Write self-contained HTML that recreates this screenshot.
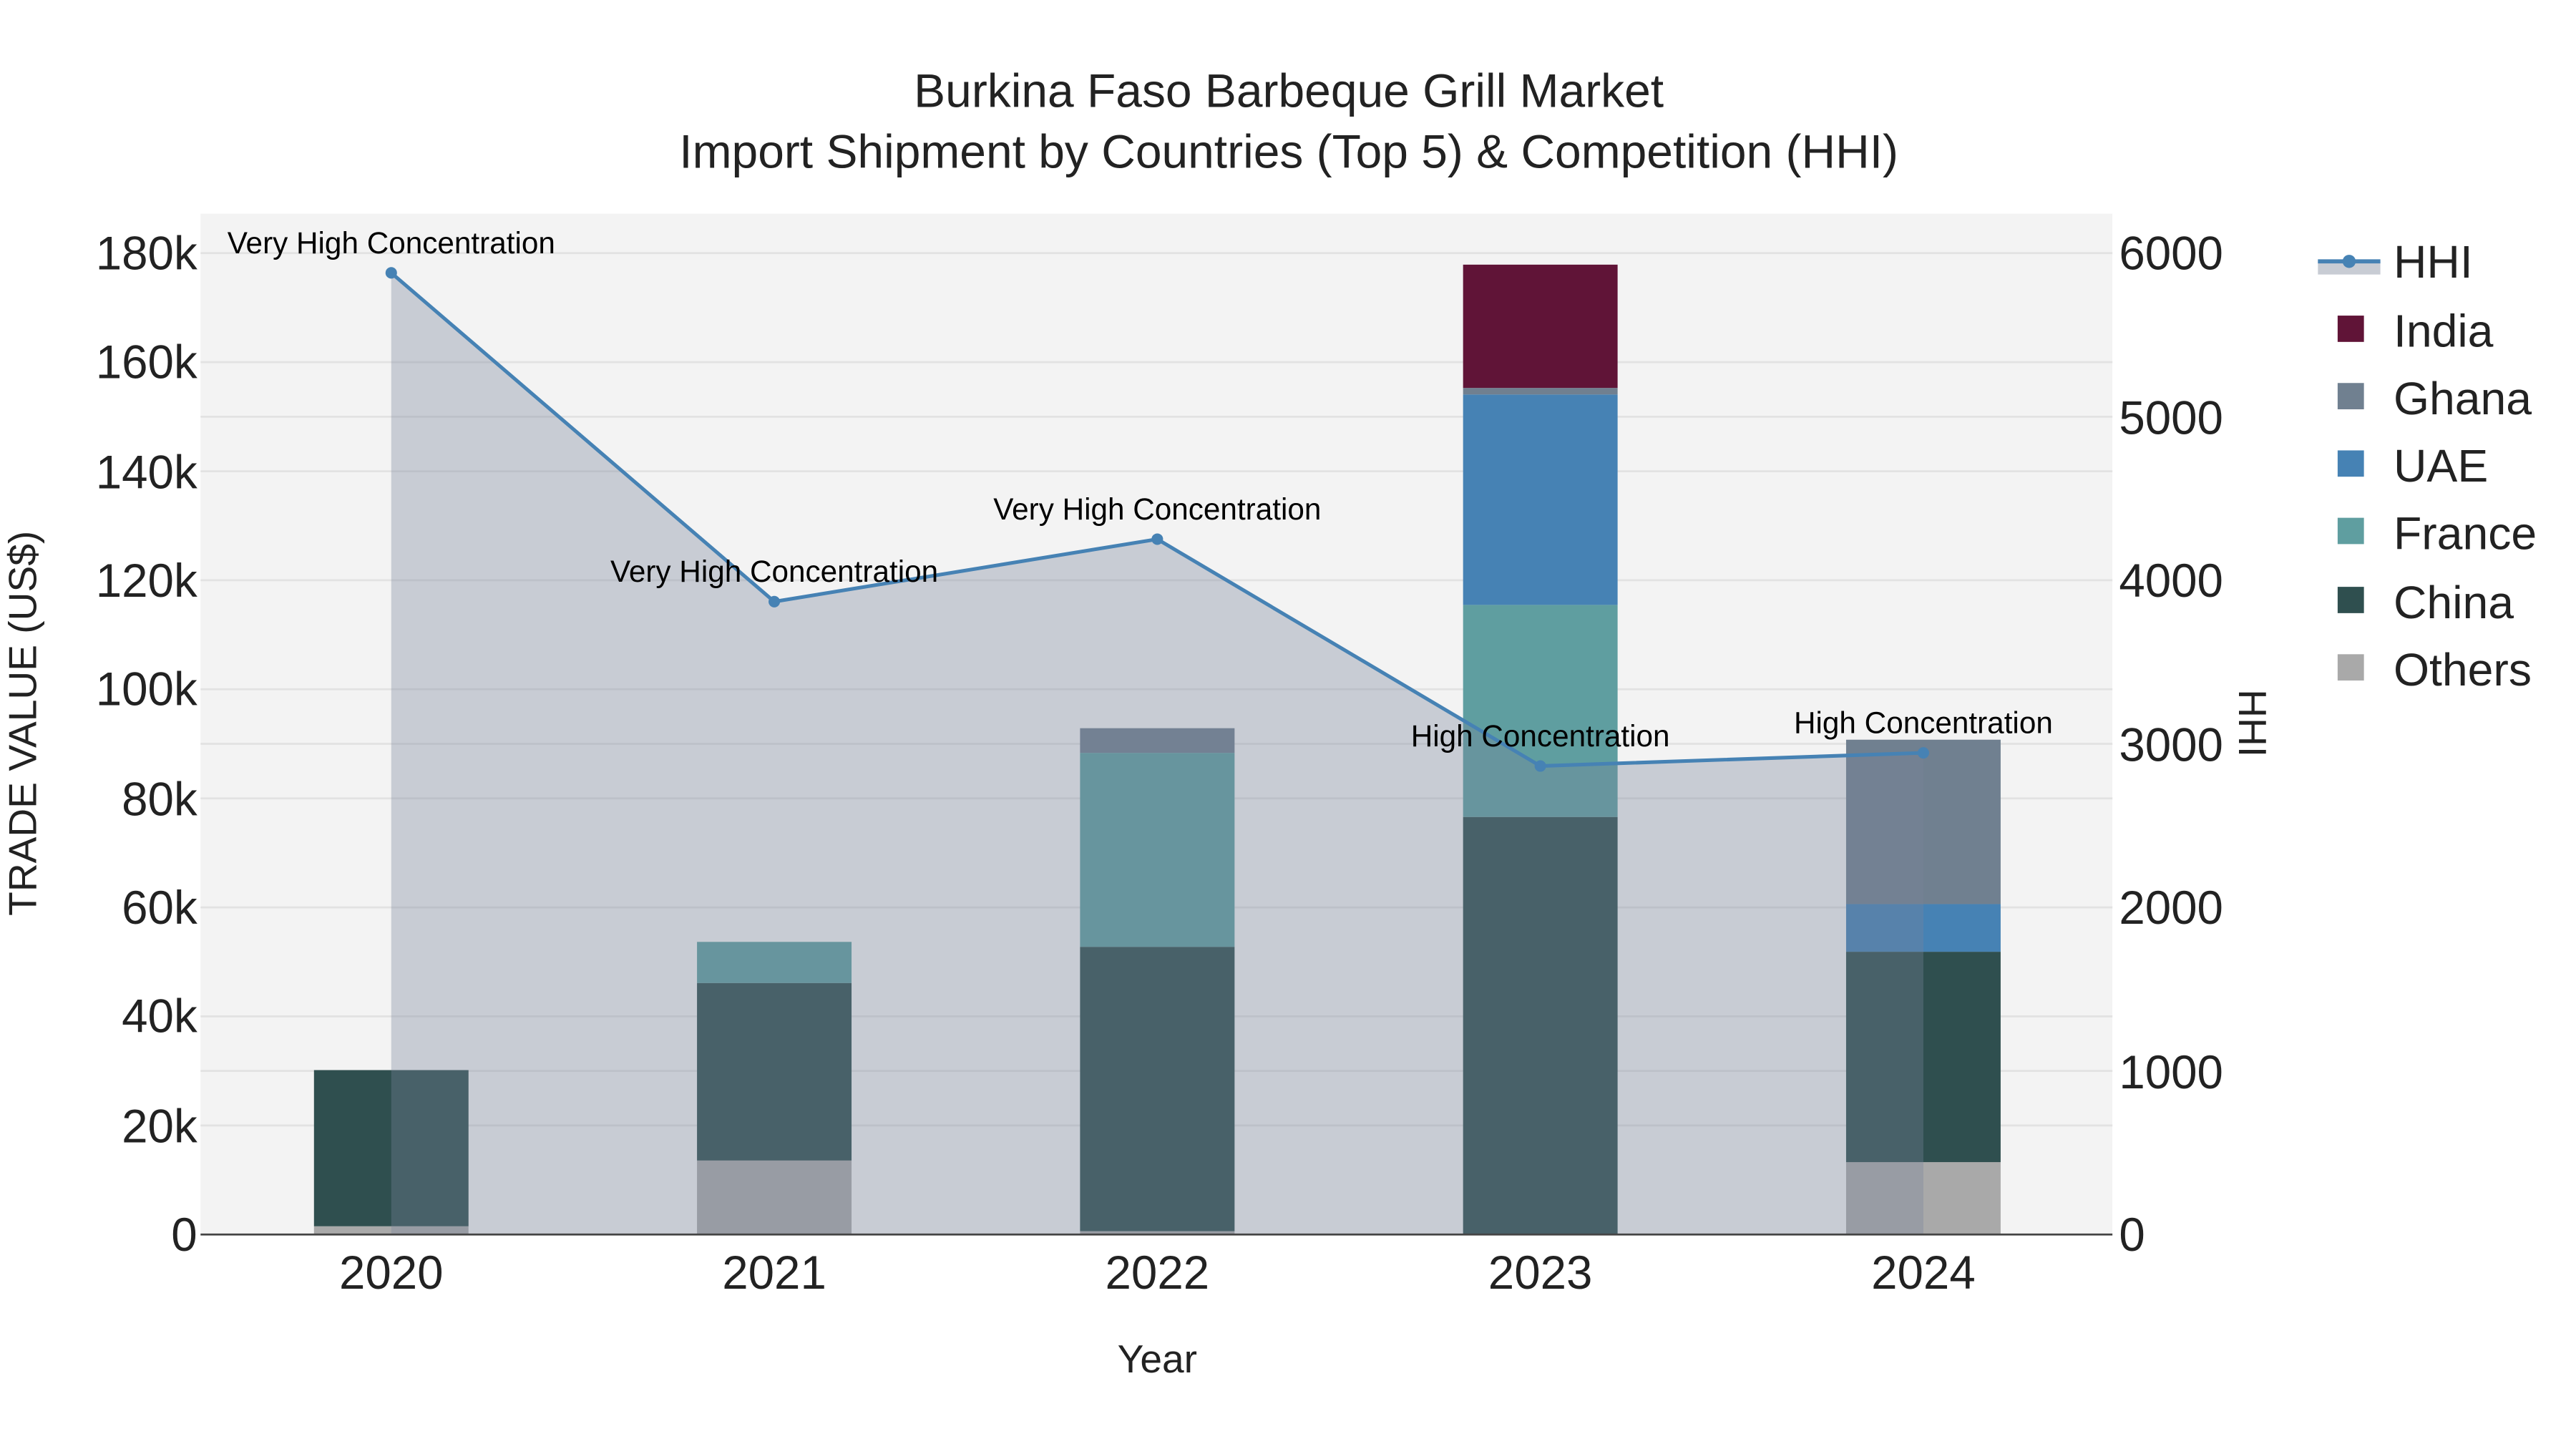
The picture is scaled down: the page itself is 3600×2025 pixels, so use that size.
<!DOCTYPE html>
<html><head><meta charset="utf-8"><style>html,body{margin:0;padding:0;background:#fff}svg{display:block}</style></head>
<body>
<svg width="3600" height="2025" viewBox="0 0 1567 881.5" preserveAspectRatio="none" xmlns="http://www.w3.org/2000/svg" font-family="Liberation Sans, sans-serif">
<rect x="0" y="0" width="1567" height="881.5" fill="#fff"/>
<rect x="122" y="130" width="1163" height="621" fill="#f3f3f3"/>
<g stroke="#e2e2e2" stroke-width="1.2">
<line x1="122" x2="1285" y1="684.7" y2="684.7"/><line x1="122" x2="1285" y1="618.3" y2="618.3"/>
<line x1="122" x2="1285" y1="552" y2="552"/><line x1="122" x2="1285" y1="485.7" y2="485.7"/>
<line x1="122" x2="1285" y1="419.3" y2="419.3"/><line x1="122" x2="1285" y1="353" y2="353"/>
<line x1="122" x2="1285" y1="286.7" y2="286.7"/><line x1="122" x2="1285" y1="220.3" y2="220.3"/>
<line x1="122" x2="1285" y1="154" y2="154"/>
<line x1="122" x2="1285" y1="651.5" y2="651.5"/>
<line x1="122" x2="1285" y1="452.5" y2="452.5"/>
<line x1="122" x2="1285" y1="253.5" y2="253.5"/>
</g>
<g>
<rect x="191" y="746" width="94" height="5" fill="#a9a9a9"/>
<rect x="191" y="651" width="94" height="95" fill="#2f4f4f"/>
<rect x="424" y="706" width="94" height="45" fill="#a9a9a9"/>
<rect x="424" y="598" width="94" height="108" fill="#2f4f4f"/>
<rect x="424" y="573" width="94" height="25" fill="#5f9ea0"/>
<rect x="657" y="749" width="94" height="2" fill="#a9a9a9"/>
<rect x="657" y="576" width="94" height="173" fill="#2f4f4f"/>
<rect x="657" y="458" width="94" height="118" fill="#5f9ea0"/>
<rect x="657" y="443" width="94" height="15" fill="#708090"/>
<rect x="890" y="497" width="94" height="254" fill="#2f4f4f"/>
<rect x="890" y="368" width="94" height="129" fill="#5f9ea0"/>
<rect x="890" y="240" width="94" height="128" fill="#4682b4"/>
<rect x="890" y="236" width="94" height="4" fill="#708090"/>
<rect x="890" y="161" width="94" height="75" fill="#601437"/>
<rect x="1123" y="707" width="94" height="44" fill="#a9a9a9"/>
<rect x="1123" y="579" width="94" height="128" fill="#2f4f4f"/>
<rect x="1123" y="550" width="94" height="29" fill="#4682b4"/>
<rect x="1123" y="450" width="94" height="100" fill="#708090"/>
</g>
<polygon points="238,166 471,366 704,328 937,466 1170,458 1170,751 238,751" fill="rgb(121,132,155)" fill-opacity="0.35"/>
<line x1="122" x2="1285" y1="751" y2="751" stroke="#444" stroke-width="1.2"/>
<polyline points="238,166 471,366 704,328 937,466 1170,458" fill="none" stroke="#4682b4" stroke-width="2.2"/>
<g fill="#4682b4"><circle cx="238" cy="166" r="3.5"/><circle cx="471" cy="366" r="3.5"/><circle cx="704" cy="328" r="3.5"/><circle cx="937" cy="466" r="3.5"/><circle cx="1170" cy="458" r="3.5"/></g>
<g font-size="18.4" text-anchor="middle" fill="#000">
<text x="238" y="154">Very High Concentration</text>
<text x="471" y="354">Very High Concentration</text>
<text x="704" y="316">Very High Concentration</text>
<text x="937" y="454">High Concentration</text>
<text x="1170" y="446">High Concentration</text>
</g>
<g font-size="28.7" text-anchor="middle" fill="#222">
<text x="784" y="65">Burkina Faso Barbeque Grill Market</text>
<text x="784" y="102">Import Shipment by Countries (Top 5) &amp; Competition (HHI)</text>
</g>
<g font-size="28.5" text-anchor="end" fill="#222">
<text x="120" y="761">0</text><text x="120" y="695">20k</text><text x="120" y="628">40k</text>
<text x="120" y="562">60k</text><text x="120" y="496">80k</text><text x="120" y="429">100k</text>
<text x="120" y="363">120k</text><text x="120" y="297">140k</text><text x="120" y="230">160k</text>
<text x="120" y="164">180k</text>
</g>
<g font-size="28.5" fill="#222">
<text x="1289" y="761">0</text><text x="1289" y="662">1000</text><text x="1289" y="562">2000</text>
<text x="1289" y="463">3000</text><text x="1289" y="363">4000</text><text x="1289" y="264">5000</text>
<text x="1289" y="164">6000</text>
</g>
<g font-size="28.5" text-anchor="middle" fill="#222">
<text x="238" y="784">2020</text><text x="471" y="784">2021</text><text x="704" y="784">2022</text>
<text x="937" y="784">2023</text><text x="1170" y="784">2024</text>
</g>
<text x="704" y="835" font-size="24" text-anchor="middle" fill="#222">Year</text>
<text transform="translate(22,440) rotate(-90)" font-size="24" text-anchor="middle" fill="#222">TRADE VALUE (US$)</text>
<text transform="translate(1362,440) rotate(90)" font-size="24" text-anchor="middle" fill="#222">HHI</text>
<rect x="1410" y="159" width="38" height="8" fill="#c8ccd4"/>
<line x1="1410" x2="1448" y1="159" y2="159" stroke="#4682b4" stroke-width="2.5"/>
<circle cx="1429" cy="159" r="4" fill="#4682b4"/>
<rect x="1422" y="192" width="16" height="16" fill="#601437"/>
<rect x="1422" y="233" width="16" height="16" fill="#708090"/>
<rect x="1422" y="274" width="16" height="16" fill="#4682b4"/>
<rect x="1422" y="315" width="16" height="16" fill="#5f9ea0"/>
<rect x="1422" y="357" width="16" height="16" fill="#2f4f4f"/>
<rect x="1422" y="398" width="16" height="16" fill="#a9a9a9"/>
<g font-size="28" fill="#222">
<text x="1456" y="169">HHI</text><text x="1456" y="211">India</text><text x="1456" y="252">Ghana</text>
<text x="1456" y="293">UAE</text><text x="1456" y="334">France</text><text x="1456" y="376">China</text>
<text x="1456" y="417">Others</text>
</g>
</svg>
</body></html>
